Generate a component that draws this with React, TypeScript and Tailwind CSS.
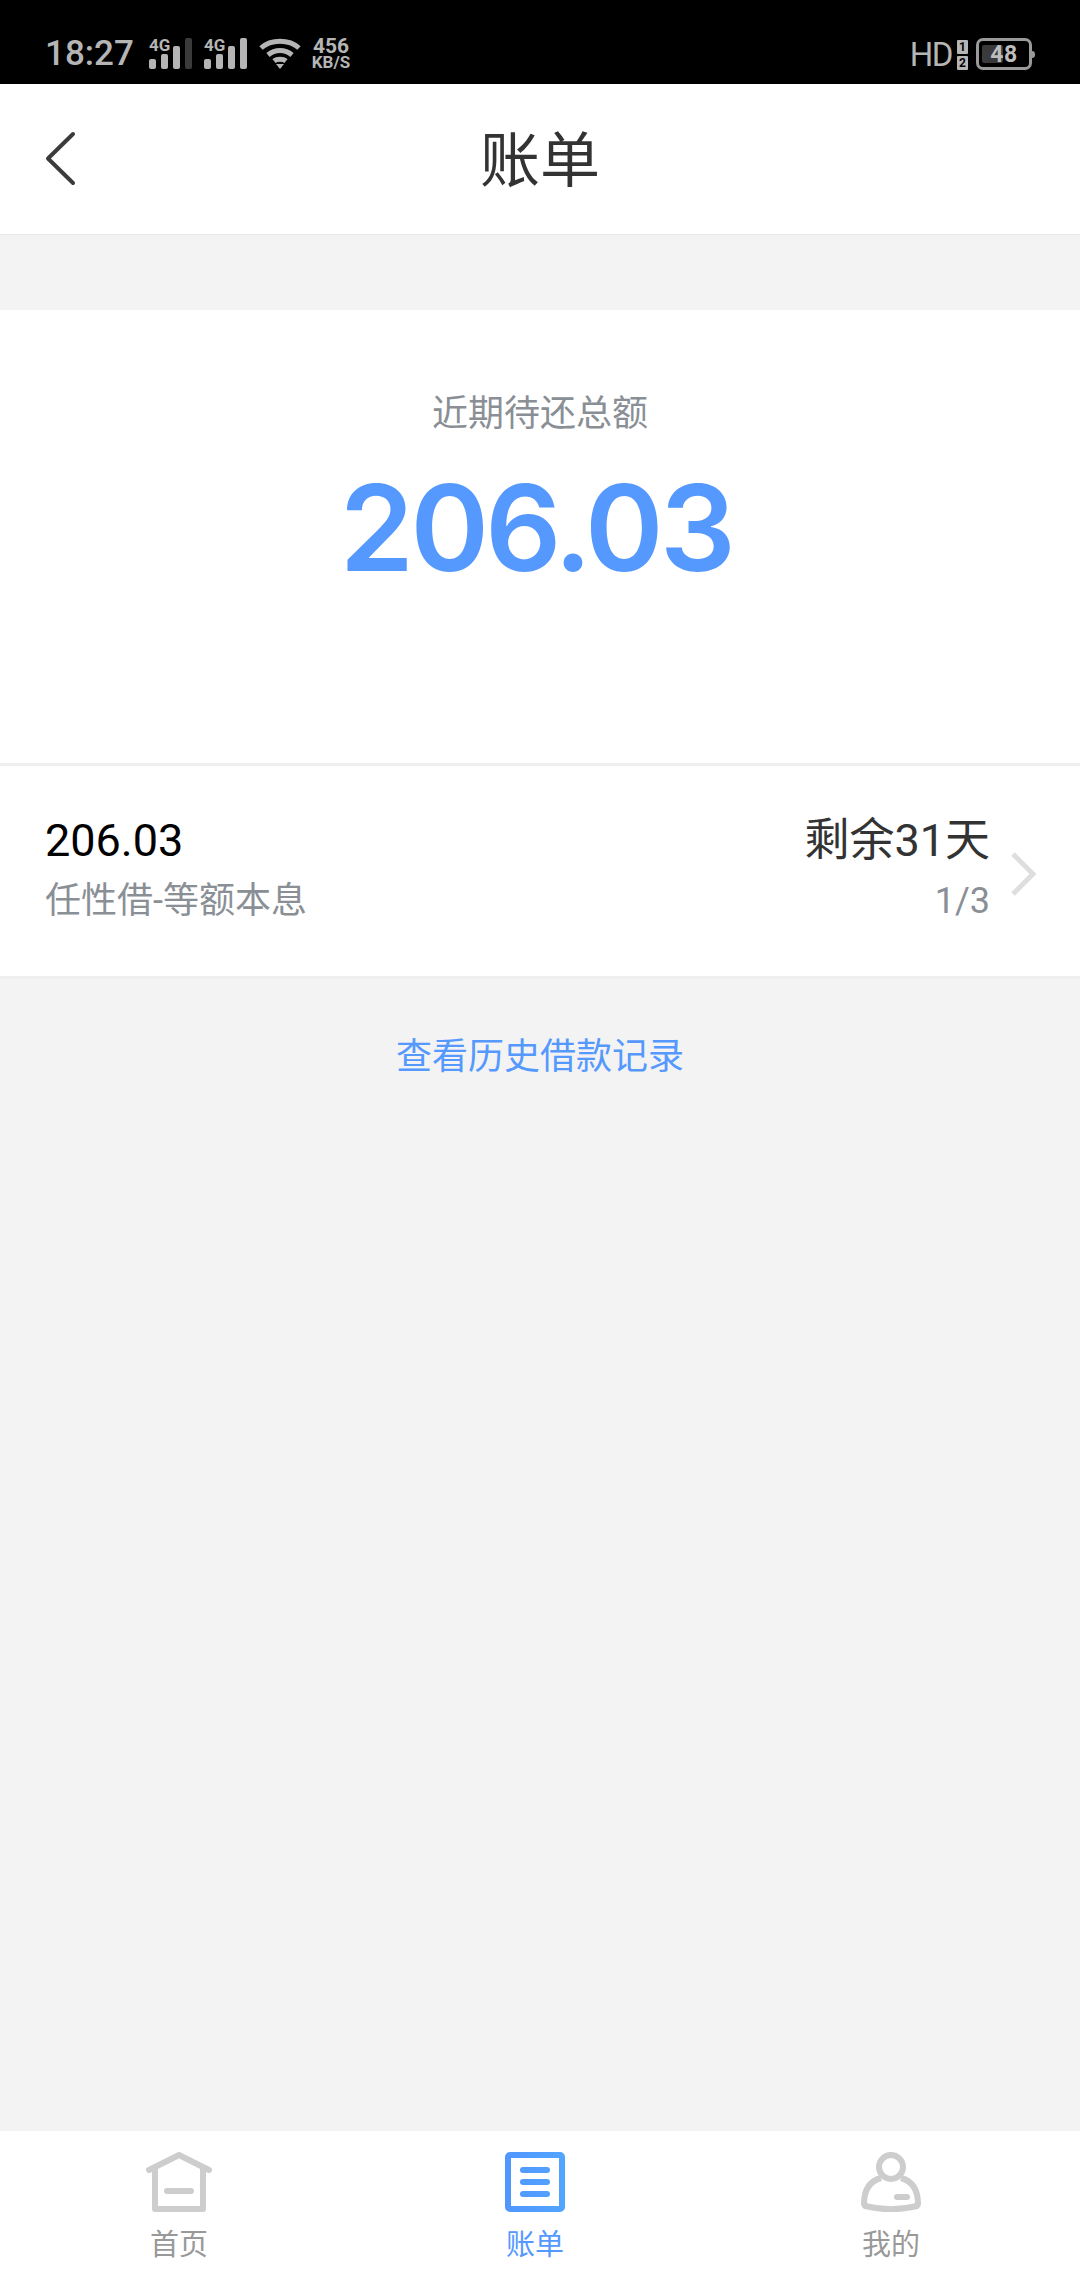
// Bill page: status bar, title bar, total due, one loan row, bottom tabs.
const cjk = "font-['Roboto','Noto_Sans_CJK_SC',sans-serif]";

function SignalBars({ dim }: { dim?: boolean }) {
  return (
    <svg width="43" height="36" viewBox="0 -5 43 36" className="block">
      <text x="0" y="13" fontFamily="Roboto" fontWeight="700" fontSize="17" fill="#b5b5b5">4G</text>
      <rect x="0" y="21" width="7" height="10" rx="2" fill="#b5b5b5" />
      <rect x="12" y="16" width="7" height="15" rx="2" fill="#b5b5b5" />
      <rect x="24" y="8" width="7" height="23" rx="2" fill="#b5b5b5" />
      <rect x="36" y="0" width="7" height="31" rx="2" fill={dim ? "#3a3a3a" : "#b5b5b5"} />
    </svg>
  );
}

function StatusBar() {
  return (
    <div className={`flex h-[84px] items-end justify-between bg-black pb-[14px] pl-[45px] pr-[45px] ${cjk}`}>
      <div className="flex items-end">
        <span className="text-[35px] font-medium leading-[33px] text-[#b5b5b5]">18:27</span>
        <div className="ml-[15px] flex items-end gap-[12px] pb-[1px]">
          <SignalBars dim />
          <SignalBars />
        </div>
        <svg width="42" height="33" viewBox="0 0 42 33" fill="none" stroke="#b5b5b5" strokeWidth="5" className="ml-[12px] block">
          <path d="M2 11 C12 2 30 2 40 11" />
          <path d="M9 18 C16 12 26 12 33 18" />
          <path d="M15 24 C18 21.500 24 21.500 27 24" />
          <path d="M17 27 L25 27 L21 32 Z" fill="#b5b5b5" stroke="none" />
        </svg>
        <div className="ml-[11px] flex flex-col items-center font-bold leading-none text-[#b5b5b5]">
          <span className="text-[21px] leading-[18px]">456</span>
          <span className="text-[17px] leading-[15px]">KB/S</span>
        </div>
      </div>
      <div className="flex items-end">
        <span className="text-[33px] leading-[30px] tracking-[-1.5px] text-[#b5b5b5]">HD</span>
        <div className="ml-[5px] flex flex-col gap-[2px]">
          <span className="flex h-[14px] w-[11px] items-center justify-center rounded-[1px] bg-[#b5b5b5] text-[12px] font-bold leading-none text-black">1</span>
          <span className="flex h-[14px] w-[11px] items-center justify-center rounded-[1px] bg-[#b5b5b5] text-[12px] font-bold leading-none text-black">2</span>
        </div>
        <div className="relative ml-[8px] mr-[3px] flex h-[32px] w-[56px] items-center justify-center rounded-[7px] border-[3px] border-[#9a9a9a]">
          <div className="absolute bottom-[4px] left-[3px] top-[4px] w-[21px] rounded-[2px] bg-[#3a3a3a]" />
          <span className="relative text-[23px] font-bold leading-none tracking-[0.5px] text-[#bdbdbd]">48</span>
          <div className="absolute -right-[6px] top-[10px] h-[7px] w-[3px] rounded-r-full bg-[#9a9a9a]" />
        </div>
      </div>
    </div>
  );
}

function Header() {
  return (
    <div className="relative flex h-[151px] items-center justify-center border-b border-[#e9e9e9] bg-white pt-[5px]">
      <svg width="34" height="56" viewBox="0 0 34 56" fill="none" stroke="#3b3b3b" strokeWidth="4" strokeLinecap="round" strokeLinejoin="round" className="absolute left-[44px] top-[47px]">
        <path d="M29 3 L4 27.500 L29 52" />
      </svg>
      <h1 className={`text-[60px] font-normal leading-none text-[#333333] ${cjk}`}>账单</h1>
    </div>
  );
}

function TotalDue() {
  return (
    <div className="mt-[75px] flex h-[453px] flex-col items-center bg-white pt-[84px]">
      <span className={`text-[36px] leading-[40px] text-[#8a8f96] ${cjk}`}>近期待还总额</span>
      <span className="mr-[8px] mt-[31px] font-['Inter',sans-serif] text-[119px] font-[570] leading-[126px] tracking-[-3.6px] text-[#5599ff]">206.03</span>
    </div>
  );
}

function LoanRow() {
  return (
    <div className={`flex h-[216px] items-center justify-between border-y-[3px] border-[#efefef] bg-white pb-[4px] pl-[45px] pr-[44px] ${cjk}`}>
      <div className="flex flex-col">
        <span className="text-[45px] leading-[50px] text-black">206.03</span>
        <span className="mt-[14px] text-[36px] leading-[42px] text-[#8a8f96]">任性借-等额本息</span>
      </div>
      <div className="flex items-center gap-[20px]">
        <div className="flex flex-col items-end">
          <span className="text-[45px] leading-[50px] text-[#333333]">剩余31天</span>
          <span className="mt-[14px] text-[36px] leading-[42px] text-[#8a8f96]">1/3</span>
        </div>
        <svg width="26" height="44" viewBox="0 0 26 44" fill="none" stroke="#dedede" strokeWidth="5" className="mt-[10px] block">
          <path d="M3 2 L23 22 L3 42" />
        </svg>
      </div>
    </div>
  );
}

function HomeIcon() {
  return (
    <svg width="68" height="60" viewBox="0 0 68 60" fill="none" stroke="#cdcdcd" strokeWidth="6" strokeLinecap="round" strokeLinejoin="round" className="block">
      <path d="M4 18 L34 3 L64 18" />
      <path d="M10 16 V57 H58 V16" />
      <path d="M22 39 H46" />
    </svg>
  );
}

function BillIcon() {
  return (
    <svg width="60" height="60" viewBox="0 0 60 60" className="block">
      <defs>
        <linearGradient id="billGrad" x1="0" x2="60" y1="0" y2="0" gradientUnits="userSpaceOnUse">
          <stop offset="0" stopColor="#5196ff" />
          <stop offset="1" stopColor="#51a5ff" />
        </linearGradient>
      </defs>
      <rect x="3" y="3" width="54" height="54" rx="2" fill="none" stroke="url(#billGrad)" strokeWidth="6" />
      <rect x="15" y="15" width="30" height="6" rx="3" fill="url(#billGrad)" />
      <rect x="15" y="27" width="30" height="6" rx="3" fill="url(#billGrad)" />
      <rect x="15" y="39" width="30" height="6" rx="3" fill="url(#billGrad)" />
    </svg>
  );
}

function UserIcon() {
  return (
    <svg width="60" height="60" viewBox="0 0 60 60" fill="none" stroke="#cdcdcd" strokeWidth="6" className="block">
      <circle cx="30" cy="15" r="12" />
      <path d="M20 26 C9 29 3 38 3 52 C3 53 3 53 4 54 C20 58 40 58 56 54 C57 53 57 53 57 52 C57 38 51 29 40 26" strokeLinejoin="round" />
      <path d="M36 45 H46" strokeLinecap="round" />
    </svg>
  );
}

function Tab({ icon, label, active }: { icon: React.ReactNode; label: string; active?: boolean }) {
  return (
    <div className="flex flex-col items-center">
      <div className="flex h-[60px] items-end">{icon}</div>
      <span className={`mt-[16px] text-[29px] leading-[34px] ${active ? "text-[#5599ff]" : "text-[#999999]"} ${cjk}`}>{label}</span>
    </div>
  );
}

function TabBar() {
  return (
    <div className="grid h-[149px] grid-cols-3 bg-white pl-[1px] pr-[11px] pt-[21px]">
      <Tab icon={<HomeIcon />} label="首页" />
      <Tab icon={<BillIcon />} label="账单" active />
      <Tab icon={<UserIcon />} label="我的" />
    </div>
  );
}

export default function App() {
  return (
    <div className="flex h-[2280px] w-[1080px] flex-col overflow-hidden bg-[#f3f3f3]">
      <StatusBar />
      <Header />
      <TotalDue />
      <LoanRow />
      <div className="flex flex-1 justify-center pt-[53px]">
        <span className={`text-[36px] leading-[50px] text-[#5599ff] ${cjk}`}>查看历史借款记录</span>
      </div>
      <TabBar />
    </div>
  );
}
